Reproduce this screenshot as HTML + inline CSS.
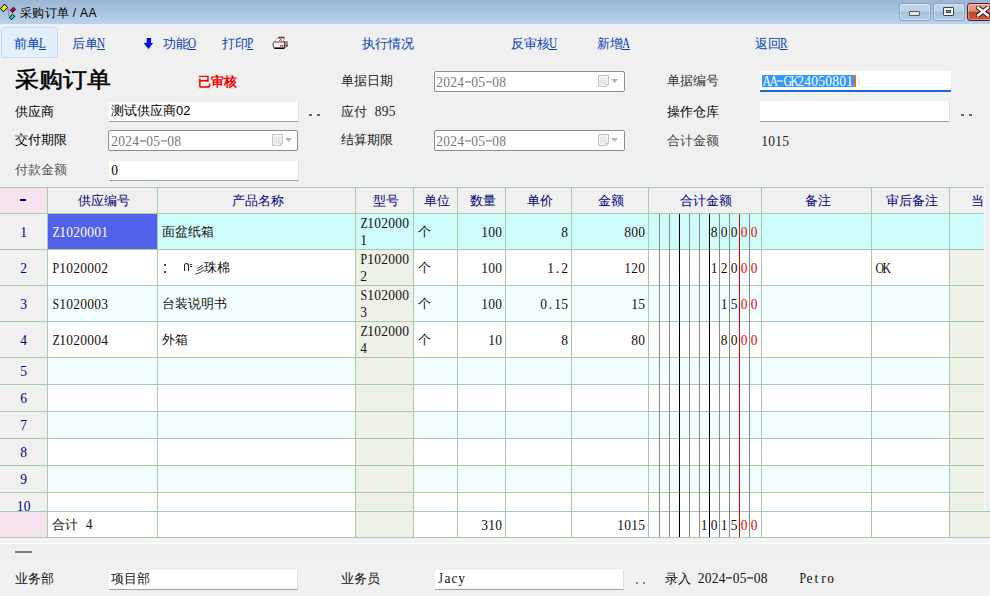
<!DOCTYPE html><html><head><meta charset="utf-8"><style>
*{margin:0;padding:0;box-sizing:border-box}
html,body{width:990px;height:596px;overflow:hidden}
body{position:relative;background:#f0f0f0;font-family:'Liberation Sans',sans-serif;font-size:13px;color:#000}
.a{position:absolute;white-space:nowrap;line-height:15px}
.m{font-family:'Liberation Serif',serif;font-size:13.5px}
.c{display:inline-block;width:7px;text-align:center;position:relative;top:-1px;transform:scaleY(1.15);transform-origin:50% 75%}
.w{display:inline-block;transform:scaleX(0.88)}
.mi .c{top:0}
.hy{display:inline-block;width:6px;height:1px;background:currentColor;vertical-align:4px}
.tb{color:#0840b8}
.u{font-family:'Liberation Serif',serif;font-size:14px;text-decoration:underline;display:inline-block;transform:scaleX(0.8);transform-origin:0 0;margin-left:-1px}
.inp{position:absolute;background:#fff;border-bottom:1px solid #a0a0a0;border-right:1px solid #e0e0e0}
.date{position:absolute;background:#fff;border:1px solid #8e8e8e;border-radius:2px}
.gl{position:absolute;background:#a8cca8}
.hd{color:#000080}
</style></head><body>
<div class="a" style="left:0;top:0;width:990px;height:24px;background:linear-gradient(#9bb5d2,#bad3eb)"></div>
<div class="a" style="left:0;top:24px;width:990px;height:1px;background:#e6edf5"></div>
<svg class="a" style="left:0;top:0" width="18" height="22" viewBox="0 0 18 22">
<path d="M6.5 9.3 H10.5 M8.5 9.3 V15.3 H10.5" stroke="#8c8c8c" stroke-width="1" fill="none"/>
<path d="M0.6 8.5 L4.4 4 L7.7 7.5 L3.4 11.7 Z" fill="#f0f000" stroke="#000" stroke-width="1"/>
<path d="M10.3 10.3 L13.5 7.3 L15.7 9.5 L12.3 12.5 Z" fill="#e000e0" stroke="#000" stroke-width="1"/>
<path d="M12.3 12.5 L15.7 9.5 L14 8.2 L11 11.5 Z" fill="#b00020"/>
<path d="M9.3 17.3 L12.5 14.3 L14.9 16.3 L11.5 19.8 Z" fill="#00d8d8" stroke="#000" stroke-width="1"/>
</svg>
<div class="a " style="left:20px;top:6px;color:#000;font-size:12px;letter-spacing:0.3px">采购订单 / AA</div>
<div class="a" style="left:899px;top:3px;width:32px;height:18px;background:linear-gradient(#c5d8ec 0%,#bcd0e7 45%,#a7bfd9 50%,#b6cde6 100%);border:1px solid #8ba3c0;border-radius:3px;box-shadow:inset 0 0 0 1px rgba(255,255,255,0.35)"></div>
<div class="a" style="left:933px;top:3px;width:32px;height:18px;background:linear-gradient(#c5d8ec 0%,#bcd0e7 45%,#a7bfd9 50%,#b6cde6 100%);border:1px solid #8ba3c0;border-radius:3px;box-shadow:inset 0 0 0 1px rgba(255,255,255,0.35)"></div>
<div class="a" style="left:967px;top:3px;width:30px;height:18px;background:linear-gradient(#e9a795 0%,#dc8a76 45%,#c2442c 50%,#cd5a3e 100%);border:1px solid #5c1a18;border-radius:3px;box-shadow:inset 0 0 0 1px rgba(255,255,255,0.35)"></div>
<div class="a" style="left:909px;top:11px;width:11px;height:5px;background:#e8e8e8;border:1px solid #505a66;border-radius:1px"></div>
<div class="a" style="left:943px;top:7px;width:11px;height:9px;background:#f4f4f4;border:1px solid #3c4652;border-radius:1px"></div>
<div class="a" style="left:946px;top:10px;width:5px;height:3px;background:#8aa6c8;border:1px solid #3c4652"></div>
<svg class="a" style="left:976px;top:6px" width="14" height="11" viewBox="0 0 14 11"><path d="M2 1.5 L12 9.5 M12 1.5 L2 9.5" stroke="#3a1010" stroke-width="4.5" stroke-linecap="round"/><path d="M2 1.5 L12 9.5 M12 1.5 L2 9.5" stroke="#fafafa" stroke-width="2.6" stroke-linecap="round"/></svg>
<div class="a" style="left:1px;top:27px;width:57px;height:31px;background:#e3effb;border:1px solid #c4ddf5;border-radius:3px"></div>
<div class="a tb" style="left:14px;top:36px;">前单<span class="u">L</span></div>
<div class="a tb" style="left:72px;top:36px;">后单<span class="u">N</span></div>
<div class="a tb" style="left:163px;top:36px;">功能<span class="u">O</span></div>
<div class="a tb" style="left:222px;top:36px;">打印<span class="u">P</span></div>
<div class="a tb" style="left:362px;top:36px;">执行情况</div>
<div class="a tb" style="left:511px;top:36px;">反审核<span class="u">U</span></div>
<div class="a tb" style="left:597px;top:36px;">新增<span class="u">A</span></div>
<div class="a tb" style="left:755px;top:36px;">返回<span class="u">R</span></div>
<svg class="a" style="left:143px;top:37px" width="12" height="13" viewBox="0 0 12 13"><path d="M1.3 6 L5.9 11.6" stroke="#5a5a20" stroke-width="1.6"/><path d="M3.7 0.9 H8.1 V6 H10.1 L5.9 11.6 L1.3 6 H3.7 Z" fill="#0000ff"/></svg>
<svg class="a" style="left:272px;top:36px" width="17" height="14" viewBox="0 0 17 14">
<path d="M2 6.5 L6 2 L12.5 2 L11 6.5 Z" fill="#fff" stroke="#888" stroke-width="0.8"/>
<path d="M6.2 1.3 H12.7" stroke="#444" stroke-width="1.2"/>
<path d="M7.2 5 L9.8 2.2 M7.2 2.2 L9.8 5" stroke="#f01010" stroke-width="1"/>
<path d="M12 5 L15.3 5 Q16 5.5 16 7 L15.8 10.5 L12.5 12.5 Z" fill="#909090"/>
<path d="M1.2 7 Q1.5 6 2.5 6 L12.5 6 L12.5 12.5 L3 12.5 Q1.2 12 1.2 10 Z" fill="#f4f4f4" stroke="#333" stroke-width="0.9"/>
<path d="M2.5 12.2 H12" stroke="#000" stroke-width="1.6"/>
<rect x="8" y="9" width="1.5" height="1.5" fill="#f01010"/><rect x="10" y="9" width="1.5" height="1.5" fill="#f01010"/>
<rect x="14.5" y="9" width="1" height="1.5" fill="#000"/>
</svg>
<div class="a " style="left:15px;top:68px;font-family:'Liberation Serif',serif;font-size:24px;font-weight:normal;-webkit-text-stroke:0.6px #000;line-height:26px;transform:scaleY(0.92);transform-origin:0 0">采购订单</div>
<div class="a " style="left:198px;top:74px;color:#f00000;font-weight:bold;font-size:13px">已审核</div>
<div class="a " style="left:15px;top:104px;color:#000">供应商</div>
<div class="a " style="left:15px;top:132px;color:#000">交付期限</div>
<div class="a " style="left:15px;top:162px;color:#555">付款金额</div>
<div class="inp" style="left:109px;top:102px;width:190px;height:20px"></div>
<div class="a " style="left:111px;top:103px;">测试供应商02</div>
<div class="a" style="left:309px;top:114px;width:3px;height:2px;background:#666"></div><div class="a" style="left:317px;top:114px;width:3px;height:2px;background:#666"></div>
<div class="date" style="left:108px;top:130px;width:190px;height:21px"></div>
<div class="inp" style="left:109px;top:161px;width:190px;height:20px"></div>
<div class="a m" style="left:111px;top:164px;"><span class="c">0</span></div>
<svg class="a" style="left:272px;top:134px" width="22" height="13" viewBox="0 0 22 13">
<path d="M0.5 0.5 H10.5 V9.5 L8.5 11.5 H0.5 Z" fill="#f3f5fb" stroke="#c9c1c1"/>
<rect x="2" y="3" width="6.5" height="6.5" fill="#d9dde8"/>
<g fill="#fff"><rect x="2.7" y="3.7" width="1.2" height="1.2"/><rect x="4.7" y="3.7" width="1.2" height="1.2"/><rect x="6.7" y="3.7" width="1.2" height="1.2"/>
<rect x="2.7" y="5.7" width="1.2" height="1.2"/><rect x="4.7" y="5.7" width="1.2" height="1.2"/><rect x="6.7" y="5.7" width="1.2" height="1.2"/>
<rect x="2.7" y="7.7" width="1.2" height="1.2"/><rect x="4.7" y="7.7" width="1.2" height="1.2"/></g>
<path d="M8.5 11.5 V9.5 H10.5" fill="#fff" stroke="#c9c1c1"/>
<path d="M13 4 H20 L16.5 8 Z" fill="#b2b2aa"/></svg>
<div class="a m" style="left:111px;top:135px;color:#777"><span class="c">2</span><span class="c">0</span><span class="c">2</span><span class="c">4</span><span class="c"><span class="hy"></span></span><span class="c">0</span><span class="c">5</span><span class="c"><span class="hy"></span></span><span class="c">0</span><span class="c">8</span></div>
<div class="a " style="left:341px;top:73px;color:#222">单据日期</div>
<div class="date" style="left:434px;top:71px;width:191px;height:21px"></div>
<div class="a m" style="left:436px;top:76px;color:#777"><span class="c">2</span><span class="c">0</span><span class="c">2</span><span class="c">4</span><span class="c"><span class="hy"></span></span><span class="c">0</span><span class="c">5</span><span class="c"><span class="hy"></span></span><span class="c">0</span><span class="c">8</span></div>
<svg class="a" style="left:598px;top:75px" width="22" height="13" viewBox="0 0 22 13">
<path d="M0.5 0.5 H10.5 V9.5 L8.5 11.5 H0.5 Z" fill="#f3f5fb" stroke="#c9c1c1"/>
<rect x="2" y="3" width="6.5" height="6.5" fill="#d9dde8"/>
<g fill="#fff"><rect x="2.7" y="3.7" width="1.2" height="1.2"/><rect x="4.7" y="3.7" width="1.2" height="1.2"/><rect x="6.7" y="3.7" width="1.2" height="1.2"/>
<rect x="2.7" y="5.7" width="1.2" height="1.2"/><rect x="4.7" y="5.7" width="1.2" height="1.2"/><rect x="6.7" y="5.7" width="1.2" height="1.2"/>
<rect x="2.7" y="7.7" width="1.2" height="1.2"/><rect x="4.7" y="7.7" width="1.2" height="1.2"/></g>
<path d="M8.5 11.5 V9.5 H10.5" fill="#fff" stroke="#c9c1c1"/>
<path d="M13 4 H20 L16.5 8 Z" fill="#b2b2aa"/></svg>
<div class="a " style="left:341px;top:104px;color:#222">应付 <span class="m mi" style="margin-left:4px"><span class="c">8</span><span class="c">9</span><span class="c">5</span></span></div>
<div class="a " style="left:341px;top:132px;color:#222">结算期限</div>
<div class="date" style="left:434px;top:130px;width:191px;height:21px"></div>
<div class="a m" style="left:436px;top:135px;color:#777"><span class="c">2</span><span class="c">0</span><span class="c">2</span><span class="c">4</span><span class="c"><span class="hy"></span></span><span class="c">0</span><span class="c">5</span><span class="c"><span class="hy"></span></span><span class="c">0</span><span class="c">8</span></div>
<svg class="a" style="left:598px;top:134px" width="22" height="13" viewBox="0 0 22 13">
<path d="M0.5 0.5 H10.5 V9.5 L8.5 11.5 H0.5 Z" fill="#f3f5fb" stroke="#c9c1c1"/>
<rect x="2" y="3" width="6.5" height="6.5" fill="#d9dde8"/>
<g fill="#fff"><rect x="2.7" y="3.7" width="1.2" height="1.2"/><rect x="4.7" y="3.7" width="1.2" height="1.2"/><rect x="6.7" y="3.7" width="1.2" height="1.2"/>
<rect x="2.7" y="5.7" width="1.2" height="1.2"/><rect x="4.7" y="5.7" width="1.2" height="1.2"/><rect x="6.7" y="5.7" width="1.2" height="1.2"/>
<rect x="2.7" y="7.7" width="1.2" height="1.2"/><rect x="4.7" y="7.7" width="1.2" height="1.2"/></g>
<path d="M8.5 11.5 V9.5 H10.5" fill="#fff" stroke="#c9c1c1"/>
<path d="M13 4 H20 L16.5 8 Z" fill="#b2b2aa"/></svg>
<div class="a " style="left:667px;top:73px;color:#333">单据编号</div>
<div class="a" style="left:760px;top:71px;width:191px;height:21px;background:#fff;border-bottom:2px solid #1a6ad0"></div>
<div class="a" style="left:762px;top:75px;width:92px;height:12px;background:#3399ff"></div>
<div class="a" style="left:854px;top:75px;width:2px;height:12px;background:#e07020"></div>
<div class="a m" style="left:762px;top:75px;color:#fff"><span class="c"><span class="w">A</span></span><span class="c"><span class="w">A</span></span><span class="c"><span class="hy"></span></span><span class="c"><span class="w">G</span></span><span class="c"><span class="w">K</span></span><span class="c">2</span><span class="c">4</span><span class="c">0</span><span class="c">5</span><span class="c">0</span><span class="c">8</span><span class="c">0</span><span class="c">1</span></div>
<div class="a " style="left:667px;top:104px;color:#000">操作仓库</div>
<div class="inp" style="left:760px;top:101px;width:190px;height:21px"></div>
<div class="a" style="left:961px;top:114px;width:3px;height:2px;background:#666"></div><div class="a" style="left:969px;top:114px;width:3px;height:2px;background:#666"></div>
<div class="a " style="left:667px;top:133px;color:#444">合计金额</div>
<div class="a m" style="left:761px;top:135px;color:#222"><span class="c">1</span><span class="c">0</span><span class="c">1</span><span class="c">5</span></div>
<div class="a" style="left:0;top:188px;width:984px;height:25px;background:#f0f0f0"></div>
<div class="a" style="left:0;top:188px;width:47px;height:25px;background:#f5e4ee"></div>
<div class="a" style="left:48px;top:214px;width:936px;height:35px;background:#d0fcfc"></div>
<div class="a" style="left:48px;top:250px;width:936px;height:35px;background:#ffffff"></div>
<div class="a" style="left:356px;top:250px;width:57px;height:35px;background:#edf1e7"></div>
<div class="a" style="left:950px;top:250px;width:34px;height:35px;background:#edf1e7"></div>
<div class="a" style="left:48px;top:286px;width:936px;height:35px;background:#f4fefe"></div>
<div class="a" style="left:356px;top:286px;width:57px;height:35px;background:#edf1e7"></div>
<div class="a" style="left:950px;top:286px;width:34px;height:35px;background:#edf1e7"></div>
<div class="a" style="left:48px;top:322px;width:936px;height:35px;background:#ffffff"></div>
<div class="a" style="left:356px;top:322px;width:57px;height:35px;background:#edf1e7"></div>
<div class="a" style="left:950px;top:322px;width:34px;height:35px;background:#edf1e7"></div>
<div class="a" style="left:48px;top:358px;width:936px;height:26px;background:#f4fefe"></div>
<div class="a" style="left:356px;top:358px;width:57px;height:26px;background:#edf1e7"></div>
<div class="a" style="left:950px;top:358px;width:34px;height:26px;background:#edf1e7"></div>
<div class="a" style="left:48px;top:385px;width:936px;height:26px;background:#ffffff"></div>
<div class="a" style="left:356px;top:385px;width:57px;height:26px;background:#edf1e7"></div>
<div class="a" style="left:950px;top:385px;width:34px;height:26px;background:#edf1e7"></div>
<div class="a" style="left:48px;top:412px;width:936px;height:26px;background:#f4fefe"></div>
<div class="a" style="left:356px;top:412px;width:57px;height:26px;background:#edf1e7"></div>
<div class="a" style="left:950px;top:412px;width:34px;height:26px;background:#edf1e7"></div>
<div class="a" style="left:48px;top:439px;width:936px;height:26px;background:#ffffff"></div>
<div class="a" style="left:356px;top:439px;width:57px;height:26px;background:#edf1e7"></div>
<div class="a" style="left:950px;top:439px;width:34px;height:26px;background:#edf1e7"></div>
<div class="a" style="left:48px;top:466px;width:936px;height:26px;background:#f4fefe"></div>
<div class="a" style="left:356px;top:466px;width:57px;height:26px;background:#edf1e7"></div>
<div class="a" style="left:950px;top:466px;width:34px;height:26px;background:#edf1e7"></div>
<div class="a" style="left:48px;top:493px;width:936px;height:18px;background:#ffffff"></div>
<div class="a" style="left:356px;top:493px;width:57px;height:18px;background:#edf1e7"></div>
<div class="a" style="left:950px;top:493px;width:34px;height:18px;background:#edf1e7"></div>
<div class="a" style="left:48px;top:512px;width:942px;height:25px;background:#ffffff"></div>
<div class="a" style="left:356px;top:512px;width:57px;height:25px;background:#edf1e7"></div>
<div class="a" style="left:950px;top:512px;width:40px;height:25px;background:#edf1e7"></div>
<div class="a" style="left:0;top:512px;width:47px;height:25px;background:#f5e4ee"></div>
<div class="a" style="left:48px;top:214px;width:109px;height:35px;background:#5161ea"></div>
<div class="gl" style="left:0;top:187px;width:984px;height:1px"></div>
<div class="gl" style="left:0;top:213px;width:984px;height:1px"></div>
<div class="gl" style="left:0;top:249px;width:984px;height:1px"></div>
<div class="gl" style="left:0;top:285px;width:984px;height:1px"></div>
<div class="gl" style="left:0;top:321px;width:984px;height:1px"></div>
<div class="gl" style="left:0;top:357px;width:984px;height:1px"></div>
<div class="gl" style="left:0;top:384px;width:984px;height:1px"></div>
<div class="gl" style="left:0;top:411px;width:984px;height:1px"></div>
<div class="gl" style="left:0;top:438px;width:984px;height:1px"></div>
<div class="gl" style="left:0;top:465px;width:984px;height:1px"></div>
<div class="gl" style="left:0;top:492px;width:984px;height:1px"></div>
<div class="gl" style="left:0;top:511px;width:990px;height:1px"></div>
<div class="gl" style="left:0;top:537px;width:990px;height:1px"></div>
<div class="gl" style="left:47px;top:187px;width:1px;height:351px"></div>
<div class="gl" style="left:157px;top:187px;width:1px;height:351px"></div>
<div class="gl" style="left:355px;top:187px;width:1px;height:351px"></div>
<div class="gl" style="left:413px;top:187px;width:1px;height:351px"></div>
<div class="gl" style="left:457px;top:187px;width:1px;height:351px"></div>
<div class="gl" style="left:505px;top:187px;width:1px;height:351px"></div>
<div class="gl" style="left:571px;top:187px;width:1px;height:351px"></div>
<div class="gl" style="left:648px;top:187px;width:1px;height:351px"></div>
<div class="gl" style="left:761px;top:187px;width:1px;height:351px"></div>
<div class="gl" style="left:871px;top:187px;width:1px;height:351px"></div>
<div class="gl" style="left:949px;top:187px;width:1px;height:351px"></div>
<div class="a" style="left:984px;top:187px;width:1px;height:324px;background:#fcfcfc"></div>
<div class="a" style="left:659px;top:214px;width:1px;height:323px;background:#888"></div>
<div class="a" style="left:669px;top:214px;width:1px;height:323px;background:#888"></div>
<div class="a" style="left:679px;top:214px;width:1px;height:323px;background:#000"></div>
<div class="a" style="left:689px;top:214px;width:1px;height:323px;background:#888"></div>
<div class="a" style="left:699px;top:214px;width:1px;height:323px;background:#888"></div>
<div class="a" style="left:709px;top:214px;width:1px;height:323px;background:#000"></div>
<div class="a" style="left:719px;top:214px;width:1px;height:323px;background:#888"></div>
<div class="a" style="left:729px;top:214px;width:1px;height:323px;background:#888"></div>
<div class="a" style="left:739px;top:214px;width:1px;height:323px;background:#f00000"></div>
<div class="a" style="left:749px;top:214px;width:1px;height:323px;background:#888"></div>
<div class="a" style="left:20px;top:199px;width:6px;height:2px;background:#000080"></div>
<div class="a hd" style="left:49px;top:193px;width:109px;text-align:center;">供应编号</div>
<div class="a hd" style="left:159px;top:193px;width:197px;text-align:center;">产品名称</div>
<div class="a hd" style="left:357px;top:193px;width:57px;text-align:center;">型号</div>
<div class="a hd" style="left:415px;top:193px;width:43px;text-align:center;">单位</div>
<div class="a hd" style="left:459px;top:193px;width:47px;text-align:center;">数量</div>
<div class="a hd" style="left:507px;top:193px;width:65px;text-align:center;">单价</div>
<div class="a hd" style="left:573px;top:193px;width:76px;text-align:center;">金额</div>
<div class="a hd" style="left:650px;top:193px;width:112px;text-align:center;">合计金额</div>
<div class="a hd" style="left:763px;top:193px;width:109px;text-align:center;">备注</div>
<div class="a hd" style="left:873px;top:193px;width:77px;text-align:center;">审后备注</div>
<div class="a hd" style="left:971px;top:193px;">当</div>
<div class="a hd m" style="left:0px;top:226px;width:47px;text-align:center;"><span class="c">1</span></div>
<div class="a hd m" style="left:0px;top:262px;width:47px;text-align:center;"><span class="c">2</span></div>
<div class="a hd m" style="left:0px;top:298px;width:47px;text-align:center;"><span class="c">3</span></div>
<div class="a hd m" style="left:0px;top:334px;width:47px;text-align:center;"><span class="c">4</span></div>
<div class="a hd m" style="left:0px;top:365px;width:47px;text-align:center;"><span class="c">5</span></div>
<div class="a hd m" style="left:0px;top:392px;width:47px;text-align:center;"><span class="c">6</span></div>
<div class="a hd m" style="left:0px;top:419px;width:47px;text-align:center;"><span class="c">7</span></div>
<div class="a hd m" style="left:0px;top:446px;width:47px;text-align:center;"><span class="c">8</span></div>
<div class="a hd m" style="left:0px;top:473px;width:47px;text-align:center;"><span class="c">9</span></div>
<div class="a hd m" style="left:0px;top:500px;width:47px;text-align:center;"><span class="c">1</span><span class="c">0</span></div>
<div class="a m" style="left:52px;top:226px;color:#fff"><span class="c"><span class="w">Z</span></span><span class="c">1</span><span class="c">0</span><span class="c">2</span><span class="c">0</span><span class="c">0</span><span class="c">0</span><span class="c">1</span></div>
<div class="a " style="left:162px;top:224px;color:#111">面盆纸箱</div>
<div class="a m" style="left:360px;top:217px;color:#111"><span class="c"><span class="w">Z</span></span><span class="c">1</span><span class="c">0</span><span class="c">2</span><span class="c">0</span><span class="c">0</span><span class="c">0</span></div>
<div class="a m" style="left:360px;top:234px;color:#111"><span class="c">1</span></div>
<div class="a " style="left:418px;top:224px;color:#111">个</div>
<div class="a m" style="left:457px;top:226px;width:45px;text-align:right;color:#111"><span class="c">1</span><span class="c">0</span><span class="c">0</span></div>
<div class="a m" style="left:505px;top:226px;width:63px;text-align:right;color:#111"><span class="c">8</span></div>
<div class="a m" style="left:571px;top:226px;width:74px;text-align:right;color:#111"><span class="c">8</span><span class="c">0</span><span class="c">0</span></div>
<div class="a m" style="left:749px;top:226px;width:10px;text-align:center;color:#f00000"><span class="c">0</span></div>
<div class="a m" style="left:739px;top:226px;width:10px;text-align:center;color:#f00000"><span class="c">0</span></div>
<div class="a m" style="left:729px;top:226px;width:10px;text-align:center;color:#111"><span class="c">0</span></div>
<div class="a m" style="left:719px;top:226px;width:10px;text-align:center;color:#111"><span class="c">0</span></div>
<div class="a m" style="left:709px;top:226px;width:10px;text-align:center;color:#111"><span class="c">8</span></div>
<div class="a m" style="left:52px;top:262px;color:#111"><span class="c"><span class="w">P</span></span><span class="c">1</span><span class="c">0</span><span class="c">2</span><span class="c">0</span><span class="c">0</span><span class="c">0</span><span class="c">2</span></div>
<div class="a " style="left:162px;top:260px;color:#111"></div>
<div class="a m" style="left:360px;top:253px;color:#111"><span class="c"><span class="w">P</span></span><span class="c">1</span><span class="c">0</span><span class="c">2</span><span class="c">0</span><span class="c">0</span><span class="c">0</span></div>
<div class="a m" style="left:360px;top:270px;color:#111"><span class="c">2</span></div>
<div class="a " style="left:418px;top:260px;color:#111">个</div>
<div class="a m" style="left:457px;top:262px;width:45px;text-align:right;color:#111"><span class="c">1</span><span class="c">0</span><span class="c">0</span></div>
<div class="a m" style="left:505px;top:262px;width:63px;text-align:right;color:#111"><span class="c">1</span><span class="c">.</span><span class="c">2</span></div>
<div class="a m" style="left:571px;top:262px;width:74px;text-align:right;color:#111"><span class="c">1</span><span class="c">2</span><span class="c">0</span></div>
<div class="a m" style="left:749px;top:262px;width:10px;text-align:center;color:#f00000"><span class="c">0</span></div>
<div class="a m" style="left:739px;top:262px;width:10px;text-align:center;color:#f00000"><span class="c">0</span></div>
<div class="a m" style="left:729px;top:262px;width:10px;text-align:center;color:#111"><span class="c">0</span></div>
<div class="a m" style="left:719px;top:262px;width:10px;text-align:center;color:#111"><span class="c">2</span></div>
<div class="a m" style="left:709px;top:262px;width:10px;text-align:center;color:#111"><span class="c">1</span></div>
<div class="a m" style="left:875px;top:262px;color:#111"><span class="c"><span class="w">O</span></span><span class="c"><span class="w">K</span></span></div>
<div class="a m" style="left:52px;top:298px;color:#111"><span class="c"><span class="w">S</span></span><span class="c">1</span><span class="c">0</span><span class="c">2</span><span class="c">0</span><span class="c">0</span><span class="c">0</span><span class="c">3</span></div>
<div class="a " style="left:162px;top:296px;color:#111">台装说明书</div>
<div class="a m" style="left:360px;top:289px;color:#111"><span class="c"><span class="w">S</span></span><span class="c">1</span><span class="c">0</span><span class="c">2</span><span class="c">0</span><span class="c">0</span><span class="c">0</span></div>
<div class="a m" style="left:360px;top:306px;color:#111"><span class="c">3</span></div>
<div class="a " style="left:418px;top:296px;color:#111">个</div>
<div class="a m" style="left:457px;top:298px;width:45px;text-align:right;color:#111"><span class="c">1</span><span class="c">0</span><span class="c">0</span></div>
<div class="a m" style="left:505px;top:298px;width:63px;text-align:right;color:#111"><span class="c">0</span><span class="c">.</span><span class="c">1</span><span class="c">5</span></div>
<div class="a m" style="left:571px;top:298px;width:74px;text-align:right;color:#111"><span class="c">1</span><span class="c">5</span></div>
<div class="a m" style="left:749px;top:298px;width:10px;text-align:center;color:#f00000"><span class="c">0</span></div>
<div class="a m" style="left:739px;top:298px;width:10px;text-align:center;color:#f00000"><span class="c">0</span></div>
<div class="a m" style="left:729px;top:298px;width:10px;text-align:center;color:#111"><span class="c">5</span></div>
<div class="a m" style="left:719px;top:298px;width:10px;text-align:center;color:#111"><span class="c">1</span></div>
<div class="a m" style="left:52px;top:334px;color:#111"><span class="c"><span class="w">Z</span></span><span class="c">1</span><span class="c">0</span><span class="c">2</span><span class="c">0</span><span class="c">0</span><span class="c">0</span><span class="c">4</span></div>
<div class="a " style="left:162px;top:332px;color:#111">外箱</div>
<div class="a m" style="left:360px;top:325px;color:#111"><span class="c"><span class="w">Z</span></span><span class="c">1</span><span class="c">0</span><span class="c">2</span><span class="c">0</span><span class="c">0</span><span class="c">0</span></div>
<div class="a m" style="left:360px;top:342px;color:#111"><span class="c">4</span></div>
<div class="a " style="left:418px;top:332px;color:#111">个</div>
<div class="a m" style="left:457px;top:334px;width:45px;text-align:right;color:#111"><span class="c">1</span><span class="c">0</span></div>
<div class="a m" style="left:505px;top:334px;width:63px;text-align:right;color:#111"><span class="c">8</span></div>
<div class="a m" style="left:571px;top:334px;width:74px;text-align:right;color:#111"><span class="c">8</span><span class="c">0</span></div>
<div class="a m" style="left:749px;top:334px;width:10px;text-align:center;color:#f00000"><span class="c">0</span></div>
<div class="a m" style="left:739px;top:334px;width:10px;text-align:center;color:#f00000"><span class="c">0</span></div>
<div class="a m" style="left:729px;top:334px;width:10px;text-align:center;color:#111"><span class="c">0</span></div>
<div class="a m" style="left:719px;top:334px;width:10px;text-align:center;color:#111"><span class="c">8</span></div>
<div class="a" style="left:164px;top:264px;width:2px;height:2px;background:#444"></div>
<div class="a" style="left:164px;top:271px;width:2px;height:2px;background:#444"></div>
<div class="a" style="left:184px;top:263px;width:5px;height:8px;border:1px solid #222;border-bottom:none;border-radius:3px 3px 0 0"></div>
<div class="a" style="left:190px;top:264px;width:2px;height:1px;background:#333"></div><div class="a" style="left:190px;top:266px;width:2px;height:1px;background:#333"></div>
<div class="a " style="left:195px;top:262px;color:#111;font-size:10px">彡</div>
<div class="a " style="left:204px;top:260px;color:#111">珠棉</div>
<div class="a " style="left:52px;top:517px;color:#111">合计 <span class="m mi" style="margin-left:4px"><span class="c">4</span></span></div>
<div class="a m" style="left:457px;top:519px;width:45px;text-align:right;color:#111"><span class="c">3</span><span class="c">1</span><span class="c">0</span></div>
<div class="a m" style="left:571px;top:519px;width:74px;text-align:right;color:#111"><span class="c">1</span><span class="c">0</span><span class="c">1</span><span class="c">5</span></div>
<div class="a m" style="left:749px;top:519px;width:10px;text-align:center;color:#f00000"><span class="c">0</span></div>
<div class="a m" style="left:739px;top:519px;width:10px;text-align:center;color:#f00000"><span class="c">0</span></div>
<div class="a m" style="left:729px;top:519px;width:10px;text-align:center;color:#111"><span class="c">5</span></div>
<div class="a m" style="left:719px;top:519px;width:10px;text-align:center;color:#111"><span class="c">1</span></div>
<div class="a m" style="left:709px;top:519px;width:10px;text-align:center;color:#111"><span class="c">0</span></div>
<div class="a m" style="left:699px;top:519px;width:10px;text-align:center;color:#111"><span class="c">1</span></div>
<div class="a" style="left:0;top:538px;width:990px;height:5px;background:#f3f3f3"></div>
<div class="a" style="left:0;top:543px;width:990px;height:1px;background:#ffffff"></div>
<div class="a" style="left:0;top:544px;width:990px;height:16px;background:#efefef"></div>
<div class="a" style="left:15px;top:551px;width:17px;height:2px;background:#808080"></div>
<div class="a " style="left:15px;top:571px;color:#111">业务部</div>
<div class="inp" style="left:109px;top:570px;width:189px;height:20px"></div>
<div class="a " style="left:111px;top:571px;color:#111">项目部</div>
<div class="a " style="left:341px;top:571px;color:#111">业务员</div>
<div class="inp" style="left:435px;top:570px;width:189px;height:20px"></div>
<div class="a m" style="left:437px;top:572px;color:#111"><span class="c"><span class="w">J</span></span><span class="c">a</span><span class="c">c</span><span class="c">y</span></div>
<div class="a" style="left:636px;top:582px;width:2px;height:2px;background:#888"></div><div class="a" style="left:643px;top:582px;width:2px;height:2px;background:#888"></div>
<div class="a " style="left:665px;top:571px;color:#111">录入 <span class="m mi" style="margin-left:3px"><span class="c">2</span><span class="c">0</span><span class="c">2</span><span class="c">4</span><span class="c"><span class="hy"></span></span><span class="c">0</span><span class="c">5</span><span class="c"><span class="hy"></span></span><span class="c">0</span><span class="c">8</span></span></div>
<div class="a m" style="left:799px;top:572px;color:#111"><span class="c"><span class="w">P</span></span><span class="c">e</span><span class="c">t</span><span class="c">r</span><span class="c">o</span></div>
</body></html>
